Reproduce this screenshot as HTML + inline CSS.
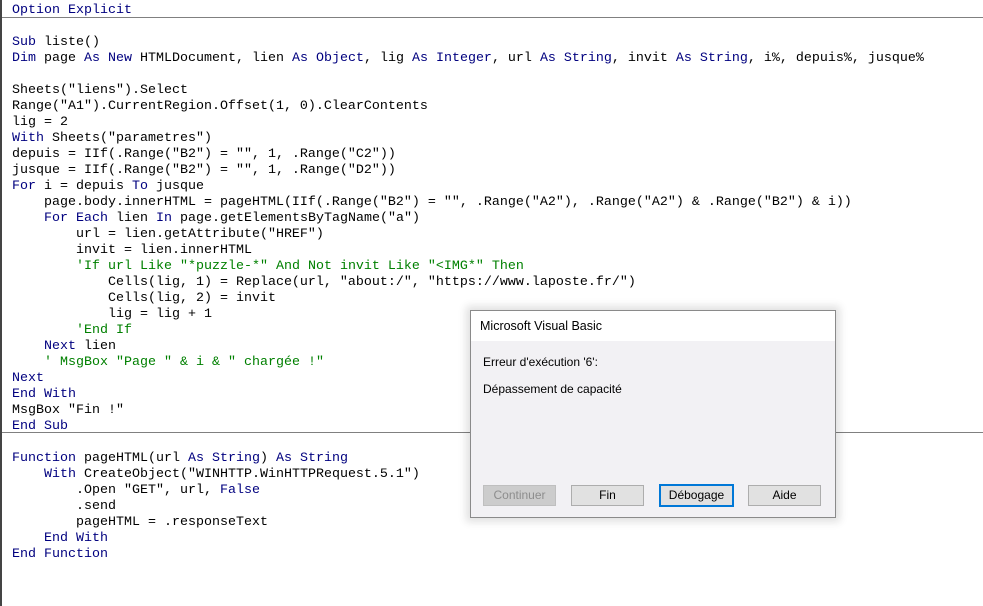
<!DOCTYPE html>
<html><head><meta charset="utf-8">
<style>
html,body{margin:0;padding:0;}
body{width:983px;height:606px;background:#fff;position:relative;overflow:hidden;}
#lb{position:absolute;left:0;top:0;width:2px;height:606px;background:#444;}
pre{position:absolute;left:12px;top:3px;margin:0;font-family:"Liberation Mono",monospace;font-size:13.33px;line-height:16px;color:#000;}
.k{color:#00007f}.c{color:#008000}
.sep{position:absolute;left:2px;right:0;height:1px;background:#808080;}
#dlg{position:absolute;left:470px;top:310px;width:364px;height:206px;background:#f2f1f4;border:1px solid #8a8a8a;box-shadow:0 0 8px 4px rgba(0,0,0,0.12);font-family:"Liberation Sans",sans-serif;font-size:12px;color:#000;}
#tt{height:30px;background:#fff;line-height:30px;padding-left:9px;font-size:12.5px;}
.t{position:absolute;left:12px;}
.b{position:absolute;top:174px;width:71px;height:19px;border:1px solid #adadad;background:#e1e1e1;text-align:center;line-height:19px;font-size:12px;}
</style></head><body>
<div id="lb"></div>
<div class="sep" style="top:17px"></div>
<div class="sep" style="top:432px"></div>
<pre><span class="k">Option Explicit</span>

<span class="k">Sub</span> liste()
<span class="k">Dim</span> page <span class="k">As New</span> HTMLDocument, lien <span class="k">As Object</span>, lig <span class="k">As Integer</span>, url <span class="k">As String</span>, invit <span class="k">As String</span>, i%, depuis%, jusque%

Sheets("liens").Select
Range("A1").CurrentRegion.Offset(1, 0).ClearContents
lig = 2
<span class="k">With</span> Sheets("parametres")
depuis = IIf(.Range("B2") = "", 1, .Range("C2"))
jusque = IIf(.Range("B2") = "", 1, .Range("D2"))
<span class="k">For</span> i = depuis <span class="k">To</span> jusque
    page.body.innerHTML = pageHTML(IIf(.Range("B2") = "", .Range("A2"), .Range("A2") &amp; .Range("B2") &amp; i))
    <span class="k">For Each</span> lien <span class="k">In</span> page.getElementsByTagName("a")
        url = lien.getAttribute("HREF")
        invit = lien.innerHTML
        <span class="c">'If url Like "*puzzle-*" And Not invit Like "&lt;IMG*" Then</span>
            Cells(lig, 1) = Replace(url, "about:/", "https://www.laposte.fr/")
            Cells(lig, 2) = invit
            lig = lig + 1
        <span class="c">'End If</span>
    <span class="k">Next</span> lien
    <span class="c">' MsgBox "Page " &amp; i &amp; " chargée !"</span>
<span class="k">Next</span>
<span class="k">End With</span>
MsgBox "Fin !"
<span class="k">End Sub</span>

<span class="k">Function</span> pageHTML(url <span class="k">As String</span>) <span class="k">As String</span>
    <span class="k">With</span> CreateObject("WINHTTP.WinHTTPRequest.5.1")
        .Open "GET", url, <span class="k">False</span>
        .send
        pageHTML = .responseText
    <span class="k">End With</span>
<span class="k">End Function</span></pre>
<div id="dlg">
<div id="tt">Microsoft Visual Basic</div>
<div class="t" style="top:44px">Erreur d'exécution '6':</div>
<div class="t" style="top:71px">Dépassement de capacité</div>
<div class="b" style="left:12px;color:#8d8d8d;background:#cccccc;border-color:#bfbfbf">Continuer</div>
<div class="b" style="left:100px">Fin</div>
<div class="b" style="left:188px;border:2px solid #0078d7;top:173px;height:19px;width:71px">Débogage</div>
<div class="b" style="left:277px">Aide</div>
</div>
</body></html>
